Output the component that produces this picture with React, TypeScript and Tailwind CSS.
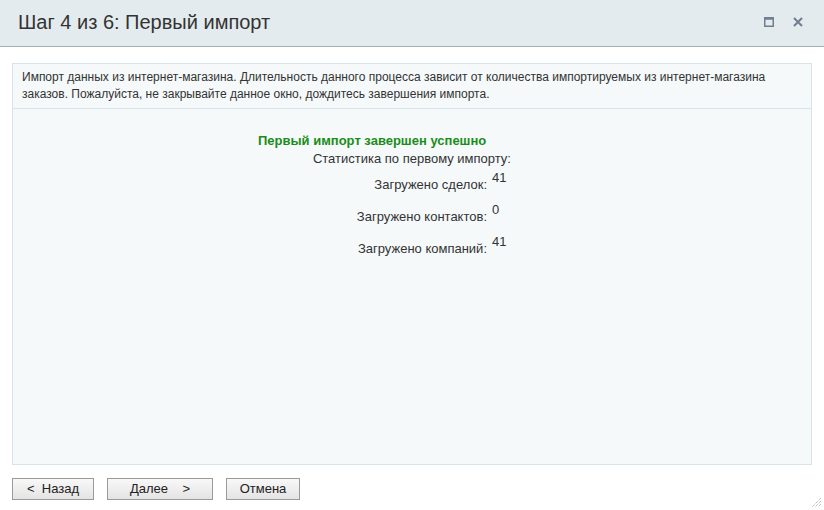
import React from "react";

export default function App() {
  const font = { fontFamily: '"Liberation Sans", Arial, sans-serif' };
  const rows = [
    { label: "Загружено сделок:", value: "41" },
    { label: "Загружено контактов:", value: "0" },
    { label: "Загружено компаний:", value: "41" },
  ];
  return (
    <div className="relative w-[824px] h-[510px] bg-white overflow-hidden text-[#333]" style={font}>
      <div className="h-[47px] bg-[#e4ebee] border-b border-[#a6aeb3] flex items-center pl-[18px] pr-[20px]">
        <div className="text-[20px] text-[#333] flex-1 leading-none pb-[2px]">Шаг 4 из 6: Первый импорт</div>
        <div className="flex items-center gap-[19px] pb-[2px] pr-[1px]">
          <svg width="10" height="10" viewBox="0 0 10 10">
            <rect x="0.75" y="0.75" width="8.5" height="8.5" fill="none" stroke="#6f7f8f" strokeWidth="1.5" />
            <rect x="0.75" y="0.75" width="8.5" height="2" fill="#6f7f8f" />
          </svg>
          <svg width="10" height="10" viewBox="0 0 10 10">
            <path d="M1 1 L9 9 M9 1 L1 9" stroke="#6f7f8f" strokeWidth="2" />
          </svg>
        </div>
      </div>
      <div className="mx-[12px] mt-[16px] h-[402px] border border-[#d9e4ea] bg-[#f5f9fa] flex flex-col">
        <div className="px-[9px] pt-[5px] pb-[5px] text-[12px] leading-[17px] text-[#333] border-b border-[#d9e4ea]">
          Импорт данных из интернет-магазина. Длительность данного процесса зависит от количества импортируемых из интернет-магазина заказов. Пожалуйста, не закрывайте данное окно, дождитесь завершения импорта.
        </div>
        <div className="pl-[245px] pt-[24px] flex flex-col">
          <div className="text-[13px] font-bold text-[#1a8c1a] leading-[16px]">Первый импорт завершен успешно</div>
          <div className="w-[253px] text-right text-[13px] leading-[16px] mt-[2px]">Статистика по первому импорту:</div>
          <div className="flex flex-col mt-[3px] gap-[14px]">
            {rows.map((r) => (
              <div key={r.label} className="flex items-start h-[18px]">
                <div className="w-[229px] text-right text-[13px] leading-[15px] pt-[7px]">{r.label}</div>
                <div className="pl-[5px] text-[13px] leading-[15px]">{r.value}</div>
              </div>
            ))}
          </div>
        </div>
      </div>
      <div className="flex items-center gap-[13px] pl-[12px] mt-[13px]">
        <button className="w-[82px] h-[22px] border border-[#9a9a9a] bg-gradient-to-b from-[#f8f8f8] to-[#e4e4e4] text-[13px] text-[#222] flex items-center justify-center">
          <span>&lt;&nbsp; Назад</span>
        </button>
        <button className="w-[106px] h-[22px] border border-[#9a9a9a] bg-gradient-to-b from-[#f8f8f8] to-[#e4e4e4] text-[13px] text-[#222] flex items-center justify-center">
          <span>Далее&nbsp;&nbsp;&nbsp;&nbsp;&gt;</span>
        </button>
        <button className="w-[74px] h-[22px] border border-[#9a9a9a] bg-gradient-to-b from-[#f8f8f8] to-[#e4e4e4] text-[13px] text-[#222] flex items-center justify-center">
          <span>Отмена</span>
        </button>
      </div>
      <svg className="absolute right-[2px] bottom-[2px]" width="11" height="11" viewBox="0 0 11 11">
        <path d="M10 1 L1 10 M10 4 L4 10 M10 7 L7 10" stroke="#a0a0a0" strokeWidth="1" strokeDasharray="1 1" />
      </svg>
    </div>
  );
}
